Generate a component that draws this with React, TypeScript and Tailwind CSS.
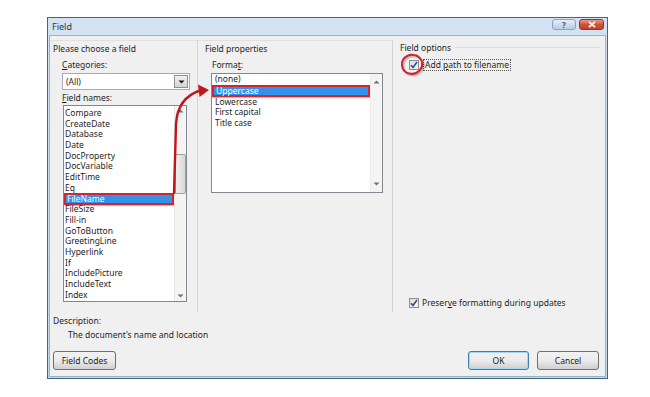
const fieldNames = [
  "Compare",
  "CreateDate",
  "Database",
  "Date",
  "DocProperty",
  "DocVariable",
  "EditTime",
  "Eq",
  "FileName",
  "FileSize",
  "Fill-in",
  "GoToButton",
  "GreetingLine",
  "Hyperlink",
  "If",
  "IncludePicture",
  "IncludeText",
  "Index",
];

const formats = ["(none)", "Uppercase", "Lowercase", "First capital", "Title case"];

const Check = () => (
  <div className="w-[10px] h-[10px] border border-[#8e8f8f] bg-gradient-to-br from-[#dcdcdc] to-[#fbfbfb] flex items-center justify-center">
    <svg width="8" height="8" viewBox="0 0 8 8">
      <path d="M1 4.2 L3 6.5 L7 1" fill="none" stroke="#2b4d8c" strokeWidth="1.6" />
    </svg>
  </div>
);

const Arrow = ({ up }: { up?: boolean }) => (
  <svg width="7" height="4" viewBox="0 0 7 4">
    <path d={up ? "M0.5 3.5 L3.5 0.5 L6.5 3.5 Z" : "M0.5 0.5 L3.5 3.5 L6.5 0.5 Z"} fill="#6f6f6f" />
  </svg>
);

const Button = ({ label, def, w }: { label: string; def?: boolean; w: string }) => (
  <div
    className={`${w} h-[19px] rounded-[3px] border ${
      def ? "border-[#3c7fb1] shadow-[inset_0_0_0_1px_#a6d6f3]" : "border-[#707070]"
    } bg-gradient-to-b from-[#f2f2f2] via-[#ebebeb] to-[#cfcfcf] flex items-center justify-center text-[#1a1a1a]`}
  >
    {label}
  </div>
);

export default function App() {
  return (
    <div className="relative w-[650px] h-[397px] bg-white overflow-hidden font-['Noto_Sans',sans-serif] text-[8.5px] leading-[11px] text-[#1e1e1e]">
      <div className="pt-[17px] pl-[47px]">
        <div className="w-[561px] h-[362px] flex flex-col border border-[#40687f] bg-gradient-to-b from-[#d3e3f3] to-[#c3d7ec]">
          {/* title bar */}
          <div className="h-[17px] flex items-start justify-between pl-[4px] pr-[3px]">
            <span className="mt-[3px] text-[9px] text-[#22364a]">Field</span>
            <div className="flex gap-[3px] mt-[1px]">
              <div className="w-[24px] h-[11px] rounded-[3px] border border-[#8ba3bb] bg-gradient-to-b from-[#e4edf7] to-[#b9cde2] flex items-center justify-center text-[8px] leading-none font-bold text-[#3d5670]">
                ?
              </div>
              <div className="w-[25px] h-[11px] rounded-[3px] border border-[#8e3b2e] bg-gradient-to-b from-[#e69a88] via-[#d1523b] to-[#c4402b] flex items-center justify-center">
                <svg width="8" height="7" viewBox="0 0 8 7">
                  <path d="M1 0.8 L7 6.2 M7 0.8 L1 6.2" stroke="white" strokeWidth="1.8" />
                </svg>
              </div>
            </div>
          </div>

          {/* client area */}
          <div className="flex-1 mx-[1px] mb-[1px] border border-[#9fb3c6] bg-[#f0f0f0] flex flex-col">
            <div className="mt-[4px] h-[272px] flex">
              {/* left */}
              <div className="w-[148px] border-r border-[#d3d3d3] border-t border-t-[#e0e0e0] flex flex-col">
                <div className="pl-[3px] pt-[2px]">Please choose a field</div>
                <div className="ml-[12px] mt-[5px]">
                  <span className="underline">C</span>ategories:
                </div>
                <div className="ml-[12px] mt-[3px] w-[128px] h-[17px] border border-[#a5acb5] bg-white flex items-center justify-between pl-[3px] pr-[1px]">
                  <span>(All)</span>
                  <div className="w-[14px] h-[13px] border border-[#8e8f8f] bg-gradient-to-b from-[#f2f2f2] to-[#d4d4d4] flex items-center justify-center">
                    <svg width="7" height="4" viewBox="0 0 7 4">
                      <path d="M0.5 0.5 L3.5 3.5 L6.5 0.5 Z" fill="#111" />
                    </svg>
                  </div>
                </div>
                <div className="ml-[12px] mt-[2px]">
                  <span className="underline">F</span>ield names:
                </div>
                <div className="ml-[13px] mt-[2px] w-[124px] h-[197px] border border-[#828790] bg-white flex">
                  <div className="flex-1 pt-[2px]">
                    {fieldNames.map((n) =>
                      n === "FileName" ? (
                        <div
                          key={n}
                          className="h-[12px] -my-[0.65px] border-2 border-[#d3252c] bg-[#3391ec] text-white leading-[8px] pl-[1px] shadow-[1px_1px_1px_rgba(0,0,0,0.25)]"
                        >
                          {n}
                        </div>
                      ) : (
                        <div key={n} className="h-[10.7px] leading-[10.7px] pl-[1px]">
                          {n}
                        </div>
                      )
                    )}
                  </div>
                  <div className="w-[12px] bg-[#f4f4f4] border-l border-[#e6e6e6] flex flex-col items-center justify-between py-[3px]">
                    <Arrow up />
                    <div className="w-[11px] h-[40px] -mt-[60px] rounded-[2px] border border-[#a0a0a0] bg-gradient-to-r from-[#f0f0f0] to-[#d8d8d8]" />
                    <Arrow />
                  </div>
                </div>
              </div>

              {/* middle */}
              <div className="w-[195px] border-r border-[#d3d3d3] border-t border-t-[#e0e0e0] flex flex-col">
                <div className="pl-[7px] pt-[2px]">Field properties</div>
                <div className="pl-[14px] mt-[5px]">
                  Forma<span className="underline">t</span>:
                </div>
                <div className="ml-[13px] mt-[3px] w-[172px] h-[120px] border border-[#828790] bg-white flex">
                  <div className="flex-1 pt-[0px]">
                    {formats.map((f) =>
                      f === "Uppercase" ? (
                        <div
                          key={f}
                          className="h-[12px] border-2 border-[#d3252c] bg-[#3391ec] text-white leading-[8px] pl-[2px] shadow-[1px_1px_1px_rgba(0,0,0,0.25)]"
                        >
                          {f}
                        </div>
                      ) : (
                        <div key={f} className="h-[10.7px] leading-[10.7px] pl-[3px]">
                          {f}
                        </div>
                      )
                    )}
                  </div>
                  <div className="w-[12px] bg-[#f4f4f4] border-l border-[#ececec] flex flex-col items-center justify-between py-[6px]">
                    <Arrow up />
                    <Arrow />
                  </div>
                </div>
              </div>

              {/* right */}
              <div className="flex-1 flex flex-col">
                <div className="pl-[7px] pt-[2px] flex items-center gap-[3px]">
                  <span>Field options</span>
                  <div className="flex-1 mr-[5px] border-t border-[#dcdcdc]" />
                </div>
                <div className="ml-[16px] mt-[6px] flex items-center gap-[4px]">
                  <Check />
                  <span className="border border-dotted border-[#555] px-[1px] leading-[10px]">
                    Add <span className="underline">p</span>ath to filename
                  </span>
                </div>
                <div className="mt-auto mb-[4px] ml-[16px] flex items-center gap-[3px]">
                  <Check />
                  <span>
                    Preser<span className="underline">v</span>e formatting during updates
                  </span>
                </div>
              </div>
            </div>

            {/* bottom */}
            <div className="pl-[3px] mt-[3px]">Description:</div>
            <div className="pl-[18px] mt-[3px]">The document's name and location</div>
            <div className="mt-[11px] flex items-center pl-[3px] pr-[6px]">
              <Button label="Field Codes" w="w-[63px]" />
              <div className="flex-1" />
              <Button label="OK" def w="w-[61px]" />
              <div className="w-[8px]" />
              <Button label="Cancel" w="w-[62px]" />
            </div>
          </div>
        </div>
      </div>

      {/* annotations drawn over the dialog */}
      <svg className="absolute left-0 top-0 pointer-events-none" width="650" height="397" viewBox="0 0 650 397">
        <path d="M174 194 L176 124 Q177.5 98 200 90.5" fill="none" stroke="#c2161d" strokeWidth="2.4" />
        <path d="M198 84.5 L209 90 L199.5 97 Z" fill="#c2161d" />
        <path
          d="M419 57 C411 51.5 401 57 402 65.5 C403 74.5 414 76.5 420 70 C423.5 66 423.5 59.5 416 55"
          fill="none"
          stroke="rgba(0,0,0,0.2)"
          strokeWidth="2.4"
          transform="translate(1.5 1.5)"
        />
        <path
          d="M419 57 C411 51.5 401 57 402 65.5 C403 74.5 414 76.5 420 70 C423.5 66 423.5 59.5 416 55"
          fill="none"
          stroke="#d3202a"
          strokeWidth="2"
        />
      </svg>
    </div>
  );
}
